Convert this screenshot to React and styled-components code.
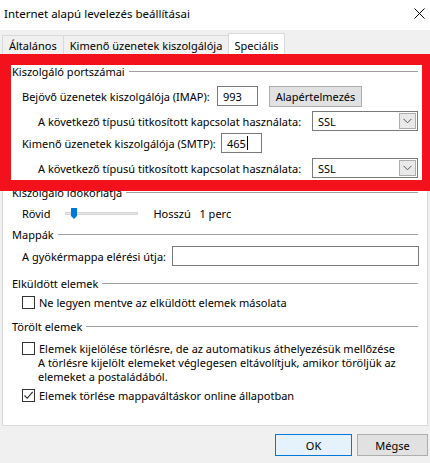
import React from "react"
import styled, { createGlobalStyle } from "styled-components"

const GlobalStyle = createGlobalStyle`
  html, body {
    margin: 0;
    padding: 0;
    background: #f0f0f0;
  }
  body {
    font-family: "Noto Sans", "Segoe UI", sans-serif;
    font-size: 11px;
    color: #000;
  }
`

const Window = styled.div`
  position: relative;
  width: 430px;
  height: 463px;
  background: #f0f0f0;
  display: flex;
  flex-direction: column;
  overflow: hidden;
`

const TitleBar = styled.div`
  height: 26px;
  background: #fff;
  display: flex;
  align-items: center;
  justify-content: space-between;
  padding: 0 5px 4px 4px;
`

const Title = styled.span`
  font-size: 11.5px;
  white-space: nowrap;
`

const TabRow = styled.div`
  display: flex;
  align-items: flex-end;
  height: 25px;
  padding-left: 2px;
  position: relative;
  z-index: 1;
`

const Tab = styled.div`
  height: ${(p) => (p.$active ? "23px" : "20px")};
  box-sizing: border-box;
  display: flex;
  align-items: center;
  padding: 0 ${(p) => (p.$active ? "5px" : "6px")};
  margin-bottom: ${(p) => (p.$active ? "-1px" : "0")};
  margin-left: -1px;
  border: 1px solid #d9d9d9;
  border-bottom: ${(p) => (p.$active ? "none" : "1px solid #d9d9d9")};
  background: ${(p) => (p.$active ? "#fff" : "#f0f0f0")};
  white-space: nowrap;
  &:first-child {
    margin-left: 0;
  }
`

const Panel = styled.div`
  margin: 0 2px;
  height: 371px;
  box-sizing: border-box;
  border: 1px solid #d9d9d9;
  background: #fff;
  padding: 7px 9px 0 9px;
  display: flex;
  flex-direction: column;
`

const GroupHeader = styled.div`
  display: flex;
  align-items: center;
  gap: 4px;
  height: 16px;
  margin-top: ${(p) => p.$mt || 0}px;
  white-space: nowrap;
  &::after {
    content: "";
    flex: 1;
    border-top: 1px solid #a0a0a0;
    margin-top: 1px;
  }
`

const Row = styled.div`
  display: flex;
  align-items: center;
  height: ${(p) => p.$h || 22}px;
  margin-top: ${(p) => p.$mt || 0}px;
  padding-left: ${(p) => p.$indent || 10}px;
  white-space: nowrap;
`

const Label = styled.span`
  width: ${(p) => (p.$w ? `${p.$w}px` : "auto")};
  flex: none;
  white-space: nowrap;
`

const TextBox = styled.div`
  width: ${(p) => p.$w}px;
  height: 20px;
  box-sizing: border-box;
  border: 1px solid #7a7a7a;
  background: #fff;
  display: flex;
  align-items: center;
  padding-left: 5px;
  flex: none;
`

const Caret = styled.span`
  display: inline-block;
  width: 1px;
  height: 14px;
  background: #000;
  margin-left: 1px;
`

const Button = styled.div`
  width: ${(p) => p.$w}px;
  height: ${(p) => p.$h || 21}px;
  box-sizing: border-box;
  display: flex;
  align-items: center;
  justify-content: center;
  background: ${(p) => (p.$default ? "#e5f1fb" : "#e1e1e1")};
  border: 1px solid ${(p) => (p.$default ? "#0078d7" : "#adadad")};
  margin-left: ${(p) => p.$ml || 0}px;
  flex: none;
`

const Select = styled.div`
  width: 106px;
  height: 20px;
  box-sizing: border-box;
  border: 1px solid #7a7a7a;
  background: #fff;
  display: flex;
  align-items: center;
  justify-content: space-between;
  padding: 1px 1px 1px 5px;
  flex: none;
`

const DropButton = styled.div`
  width: 17px;
  height: 16px;
  box-sizing: border-box;
  border: 1px solid #adadad;
  background: #e9e9e9;
  display: flex;
  align-items: center;
  justify-content: center;
`

const SliderTrack = styled.div`
  position: relative;
  width: 73px;
  height: 3px;
  box-sizing: border-box;
  background: #e7e7e7;
  border: 1px solid #d6d6d6;
  margin: 0 15px 0 15px;
  flex: none;
`

const Thumb = styled.svg`
  position: absolute;
  left: 5px;
  top: -5px;
`

const CheckBox = styled.div`
  width: 13px;
  height: 13px;
  box-sizing: border-box;
  border: 1px solid #333;
  background: #fff;
  margin-right: 4px;
  flex: none;
  display: flex;
  align-items: center;
  justify-content: center;
`

const Note = styled.div`
  padding-left: 26px;
  line-height: 14px;
  white-space: nowrap;
  margin-top: ${(p) => p.$mt || 0}px;
`

const Footer = styled.div`
  display: flex;
  justify-content: flex-end;
  gap: 5px;
  padding-right: 2px;
  margin-top: 8px;
`

const Highlight = styled.div`
  position: absolute;
  left: 0;
  top: 54px;
  width: 430px;
  height: 137px;
  box-sizing: border-box;
  border-style: solid;
  border-color: #f3121c;
  border-width: 11px 8px 11px 11px;
  pointer-events: none;
  z-index: 5;
`

function Chevron() {
  return (
    <svg width="9" height="6" viewBox="0 0 9 6">
      <path d="M0.5 0.8 L4.5 4.8 L8.5 0.8" fill="none" stroke="#555" strokeWidth="1" />
    </svg>
  )
}

function Check({ checked }) {
  return (
    <CheckBox>
      {checked && (
        <svg width="11" height="11" viewBox="0 0 11 11">
          <path d="M1.5 5.5 L4.2 8.3 L9.7 1.8" fill="none" stroke="#222" strokeWidth="1.1" />
        </svg>
      )}
    </CheckBox>
  )
}

export default function App() {
  return (
    <>
      <GlobalStyle />
      <Window>
        <TitleBar>
          <Title>Internet alapú levelezés beállításai</Title>
          <svg width="11" height="11" viewBox="0 0 11 11">
            <path d="M0.5 0.5 L10.5 10.5 M10.5 0.5 L0.5 10.5" stroke="#000" strokeWidth="1" />
          </svg>
        </TitleBar>

        <TabRow>
          <Tab>Általános</Tab>
          <Tab>Kimenő üzenetek kiszolgálója</Tab>
          <Tab $active>Speciális</Tab>
        </TabRow>

        <Panel>
          <GroupHeader>Kiszolgáló portszámai</GroupHeader>
          <Row $mt={6}>
            <Label $w={195}>Bejövő üzenetek kiszolgálója (IMAP):</Label>
            <TextBox $w={41}>993</TextBox>
            <Button $w={93} $ml={11}>Alapértelmezés</Button>
          </Row>
          <Row $mt={3} $indent={26}>
            <Label $w={274}>A következő típusú titkosított kapcsolat használata:</Label>
            <Select>
              SSL
              <DropButton>
                <Chevron />
              </DropButton>
            </Select>
          </Row>
          <Row>
            <Label $w={199}>Kimenő üzenetek kiszolgálója (SMTP):</Label>
            <TextBox $w={41}>
              465
              <Caret />
            </TextBox>
          </Row>
          <Row $mt={3} $indent={26}>
            <Label $w={274}>A következő típusú titkosított kapcsolat használata:</Label>
            <Select>
              SSL
              <DropButton>
                <Chevron />
              </DropButton>
            </Select>
          </Row>

          <GroupHeader $mt={5}>Kiszolgáló időkorlátja</GroupHeader>
          <Row $h={20} $mt={3}>
            <Label>Rövid</Label>
            <SliderTrack>
              <Thumb width="6" height="11" viewBox="0 0 6 11">
                <path d="M0 0 H6 V8 L3 11 L0 8 Z" fill="#0078d7" />
              </Thumb>
            </SliderTrack>
            <Label $w={46}>Hosszú</Label>
            <Label>1 perc</Label>
          </Row>

          <GroupHeader $mt={3}>Mappák</GroupHeader>
          <Row $mt={3}>
            <Label $w={150}>A gyökérmappa elérési útja:</Label>
            <TextBox $w={247} />
          </Row>

          <GroupHeader $mt={8}>Elküldött elemek</GroupHeader>
          <Row $h={18} $mt={2}>
            <Check />
            Ne legyen mentve az elküldött elemek másolata
          </Row>

          <GroupHeader $mt={7}>Törölt elemek</GroupHeader>
          <Row $h={16} $mt={6}>
            <Check />
            Elemek kijelölése törlésre, de az automatikus áthelyezésük mellőzése
          </Row>
          <Note>
            A törlésre kijelölt elemeket véglegesen eltávolítjuk, amikor töröljük az
            <br />
            elemeket a postaládából.
          </Note>
          <Row $h={18} $mt={2}>
            <Check checked />
            Elemek törlése mappaváltáskor online állapotban
          </Row>
        </Panel>

        <Footer>
          <Button $w={77} $h={22} $default>
            OK
          </Button>
          <Button $w={71} $h={22}>
            Mégse
          </Button>
        </Footer>

        <Highlight />
      </Window>
    </>
  )
}
